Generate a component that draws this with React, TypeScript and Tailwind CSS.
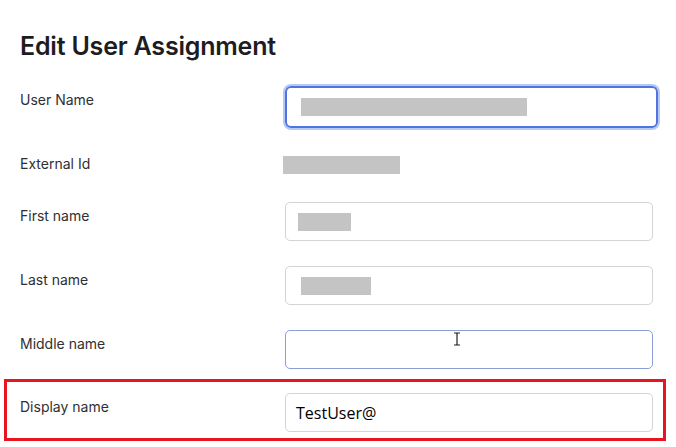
import type { ReactNode } from "react";

function Row({
  label,
  children,
  className = "",
  labelClass = "pt-[4px]",
}: {
  label: string;
  children: ReactNode;
  className?: string;
  labelClass?: string;
}) {
  return (
    <div className={`flex items-start ${className}`}>
      <div
        className={`w-[265px] shrink-0 text-[14px] leading-[20px] text-[#2f2f33] ${labelClass}`}
      >
        {label}
      </div>
      {children}
    </div>
  );
}

function Redacted({ w, className = "" }: { w: number; className?: string }) {
  return (
    <span
      className={`block h-[18px] bg-[#c4c4c4] ${className}`}
      style={{ width: w }}
    />
  );
}

export default function App() {
  return (
    <div className="h-[447px] w-[676px] overflow-hidden bg-white font-['Inter',sans-serif]">
      <div className="pl-[20px] pt-[31px]">
        <h1 className="text-[25px] font-semibold leading-[30px] tracking-[-0.2px] text-[#1d1d21]">
          Edit User Assignment
        </h1>

        <Row label="User Name" className="mt-[25px]">
          <div className="flex h-[42px] w-[373px] items-center rounded-[6px] border-2 border-[#4f74e0] px-[14px] ring-2 ring-[#b8c8f4]">
            <Redacted w={226} />
          </div>
        </Row>

        <Row label="External Id" className="mt-[26px] h-[48px]" labelClass="pt-0">
          <Redacted w={117} className="mt-[2px] -ml-[2px]" />
        </Row>

        <Row label="First name" className="h-[64px]">
          <div className="flex h-[39px] w-[368px] items-center rounded-[5px] border border-[#d4d4d8] px-[12px]">
            <Redacted w={53} />
          </div>
        </Row>

        <Row label="Last name" className="h-[64px]">
          <div className="flex h-[39px] w-[368px] items-center rounded-[5px] border border-[#d4d4d8] px-[15px]">
            <Redacted w={70} />
          </div>
        </Row>

        <Row label="Middle name" className="h-[49px]">
          <div className="relative h-[39px] w-[368px] rounded-[5px] border border-[#8a9fd6]">
            <svg
              className="absolute left-[167px] top-[1px]"
              width="8"
              height="14"
              viewBox="0 0 8 14"
            >
              <path
                d="M1 1h2.5L4 1.8 4.5 1H7M4 1.8v10.4M1 13h2.5L4 12.2 4.5 13H7"
                fill="none"
                stroke="#222"
                strokeWidth="1.2"
              />
            </svg>
          </div>
        </Row>
      </div>

      <div className="ml-[4px] flex h-[62px] w-[662px] items-start border-[3px] border-[#e8141f] pl-[13px] pt-[11px]">
        <div className="w-[265px] shrink-0 pt-[4px] text-[14px] leading-[20px] text-[#2f2f33]">
          Display name
        </div>
        <div className="flex h-[39px] w-[368px] items-center rounded-[5px] border border-[#d4d4d8] pl-[10px] font-['Open_Sans',sans-serif] text-[16px] text-black">
          TestUser@
        </div>
      </div>
    </div>
  );
}
